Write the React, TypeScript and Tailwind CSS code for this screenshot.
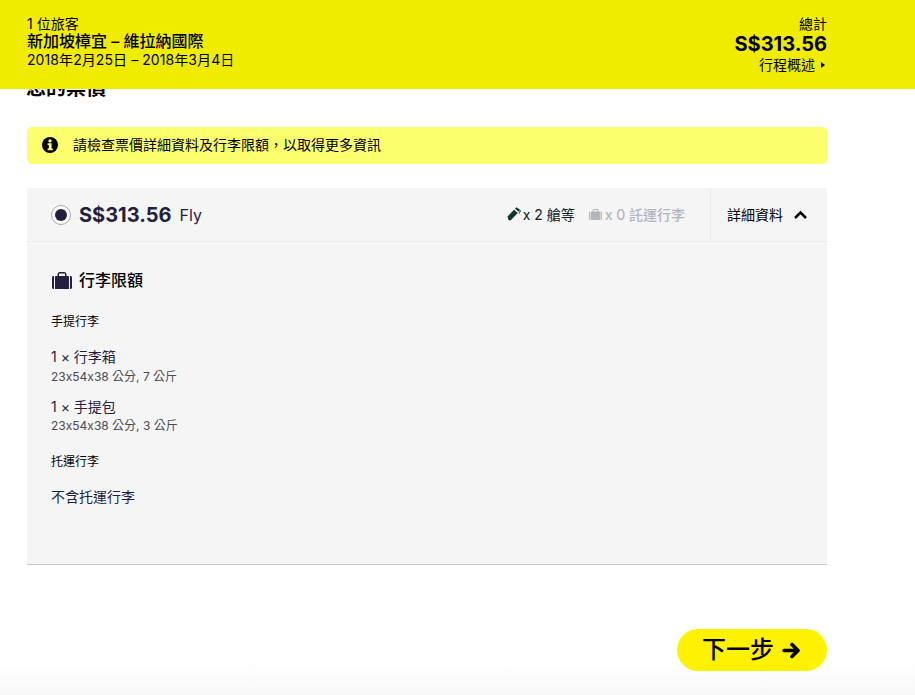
import React from "react";

const font = { fontFamily: '"Inter", "Noto Sans CJK TC", sans-serif' };

function Bag({ className }: { className?: string }) {
  return (
    <svg viewBox="0 0 20 17" className={className} fill="currentColor">
      <path d="M0 5.5C0 4.6.6 4 1.5 4H2V17H1.5C.6 17 0 16.4 0 15.5Z" />
      <path d="M20 5.5C20 4.6 19.4 4 18.5 4H18V17H18.5C19.4 17 20 16.4 20 15.5Z" />
      <path d="M3 5C3 4.4 3.4 4 4 4H5.5V2.4C5.5 1 6.5 0 8 0H12C13.5 0 14.5 1 14.5 2.4V4H16C16.6 4 17 4.4 17 5V17H3ZM7 4H13V2.5C13 1.9 12.6 1.5 12 1.5H8C7.4 1.5 7 1.9 7 2.5Z" fillRule="evenodd" />
    </svg>
  );
}

export default function App() {
  return (
    <div style={font} className="relative h-[695px] w-[915px] overflow-hidden bg-white text-black [font-feature-settings:'calt'_0]">
      <header className="absolute inset-x-0 top-0 z-10 flex h-[89px] justify-between bg-[#f0ec00] pl-[27px] pr-[88px] pt-[15px]">
        <div className="flex flex-col">
          <span className="text-[14px] leading-[18px]">1 位旅客</span>
          <span className="-mt-px text-[16px] font-medium leading-[18px]">新加坡樟宜 – 維拉納國際</span>
          <span className="mt-px text-[14px] leading-[18px] tracking-[0.08px]">2018年2月25日 – 2018年3月4日</span>
        </div>
        <div className="flex flex-col items-end">
          <span className="text-[14px] leading-[18px]">總計</span>
          <span className="-mt-px text-[20px] font-bold leading-[24px]">S$313.56</span>
          <span className="mt-px flex items-center gap-[6px] pr-[2px] text-[14px] leading-[16px]">
            行程概述
            <span className="h-0 w-0 border-y-[3px] border-l-[4px] border-y-transparent border-l-black" />
          </span>
        </div>
      </header>

      <main className="flex flex-col px-[27px] pt-[76px]">
        <h2 className="-ml-px text-[20px] font-bold leading-[24px]">您的票價</h2>

        <div className="mt-[27px] flex h-[37px] w-[800px] items-center gap-[15px] rounded-[5px] bg-[#fbff6b] pb-[2px] pl-[15px] text-[14px]">
          <svg viewBox="0 0 16 16" className="h-[16px] w-[16px]">
            <circle cx="8" cy="8" r="8" fill="#000" />
            <path d="M5.6 6.3H9.6V11.6H10.8V13.2H5.6V11.6H6.8V7.9H5.6Z" fill="#fbff6b" />
            <circle cx="8" cy="3.9" r="1.7" fill="#fbff6b" />
          </svg>
          <span>請檢查票價詳細資料及行李限額，以取得更多資訊</span>
        </div>

        <section className="mt-[24px] flex h-[377px] w-[800px] flex-col border-b border-[#c9c9c9] bg-[#f5f5f5]">
          <div className="flex h-[54px] items-center border-b border-dotted border-[#e2e2e2]">
            <div className="flex flex-1 items-center pl-[24px]">
              <span className="flex h-[20px] w-[20px] items-center justify-center rounded-full border border-[#a9a7b5] bg-white">
                <span className="h-[12px] w-[12px] rounded-full bg-[#231f3f]" />
              </span>
              <span className="ml-[8px] text-[20px] font-bold text-[#231f3f]">S$313.56</span>
              <span className="ml-[8px] text-[16px] text-[#231f3f]">Fly</span>
            </div>
            <div className="flex items-center pb-px pr-[25px] text-[14px]">
              <svg viewBox="0 0 14 14" className="h-[14px] w-[14px] text-[#12352f]" fill="currentColor">
                <path d="M0.5 9.5 7 2.8l3.8 3.1L3.5 13.5 1.5 13Z" />
                <path d="M8 1.8 9.5 0.3l3.6 2.4-1.4 2Z" />
                <path d="M12.2 5.2 14 2.2 13.6 4.6 11.8 7.4Z" />
              </svg>
              <span className="ml-[2px] text-[#12201f]">x 2 艙等</span>
              <Bag className="ml-[14px] h-[11px] w-[13px] text-[#b4b4bd]" />
              <span className="ml-[3px] font-medium text-[#b4b4bd]">x 0 託運行李</span>
            </div>
            <div className="flex h-full w-[117px] items-center border-l border-dotted border-[#e2e2e2] pb-px pl-[16px] text-[14px]">
              <span>詳細資料</span>
              <svg viewBox="0 0 13 9" className="ml-[11px] h-[9px] w-[13px]" fill="none" stroke="#000" strokeWidth="2.5">
                <path d="M1 8 6.5 2.5 12 8" />
              </svg>
            </div>
          </div>

          <div className="flex flex-col pl-[24px] pt-[28px]">
            <div className="flex items-center">
              <Bag className="ml-[1px] h-[17px] w-[20px] text-[#231f3f]" />
              <span className="ml-[7px] text-[16px] font-medium leading-[20px]">行李限額</span>
            </div>
            <h3 className="mt-[24px] text-[12px] leading-[16px]">手提行李</h3>
            <p className="mt-[18px] text-[14px] leading-[18px] text-[#231f3f]">1 × 行李箱</p>
            <p className="mt-[3px] text-[12px] leading-[16px] text-[#4a4a55]">23x54x38 公分, 7 公斤</p>
            <p className="mt-[13px] text-[14px] leading-[18px] text-[#231f3f]">1 × 手提包</p>
            <p className="mt-[2px] text-[12px] leading-[16px] text-[#4a4a55]">23x54x38 公分, 3 公斤</p>
            <h3 className="mt-[20px] text-[12px] leading-[16px]">托運行李</h3>
            <p className="mt-[18px] text-[14px] leading-[18px] text-[#231f3f]">不含托運行李</p>
          </div>
        </section>

        <div className="relative z-10 mt-[64px] flex w-[800px] justify-end">
          <button className="flex h-[42px] w-[150px] items-center justify-center gap-[8px] rounded-full bg-[#fff200] pr-[2px] text-[24px] font-medium">
            下一步
            <svg viewBox="0 0 18 17" className="h-[17px] w-[18px]" fill="none" stroke="#000" strokeWidth="3.6" strokeLinecap="round" strokeLinejoin="round">
              <path d="M2 8.5h13M10 2.5l6 6-6 6" />
            </svg>
          </button>
        </div>
      </main>

      <div className="absolute inset-x-0 bottom-0 h-[35px] bg-gradient-to-b from-white to-[#f8f8f8]" />
    </div>
  );
}
